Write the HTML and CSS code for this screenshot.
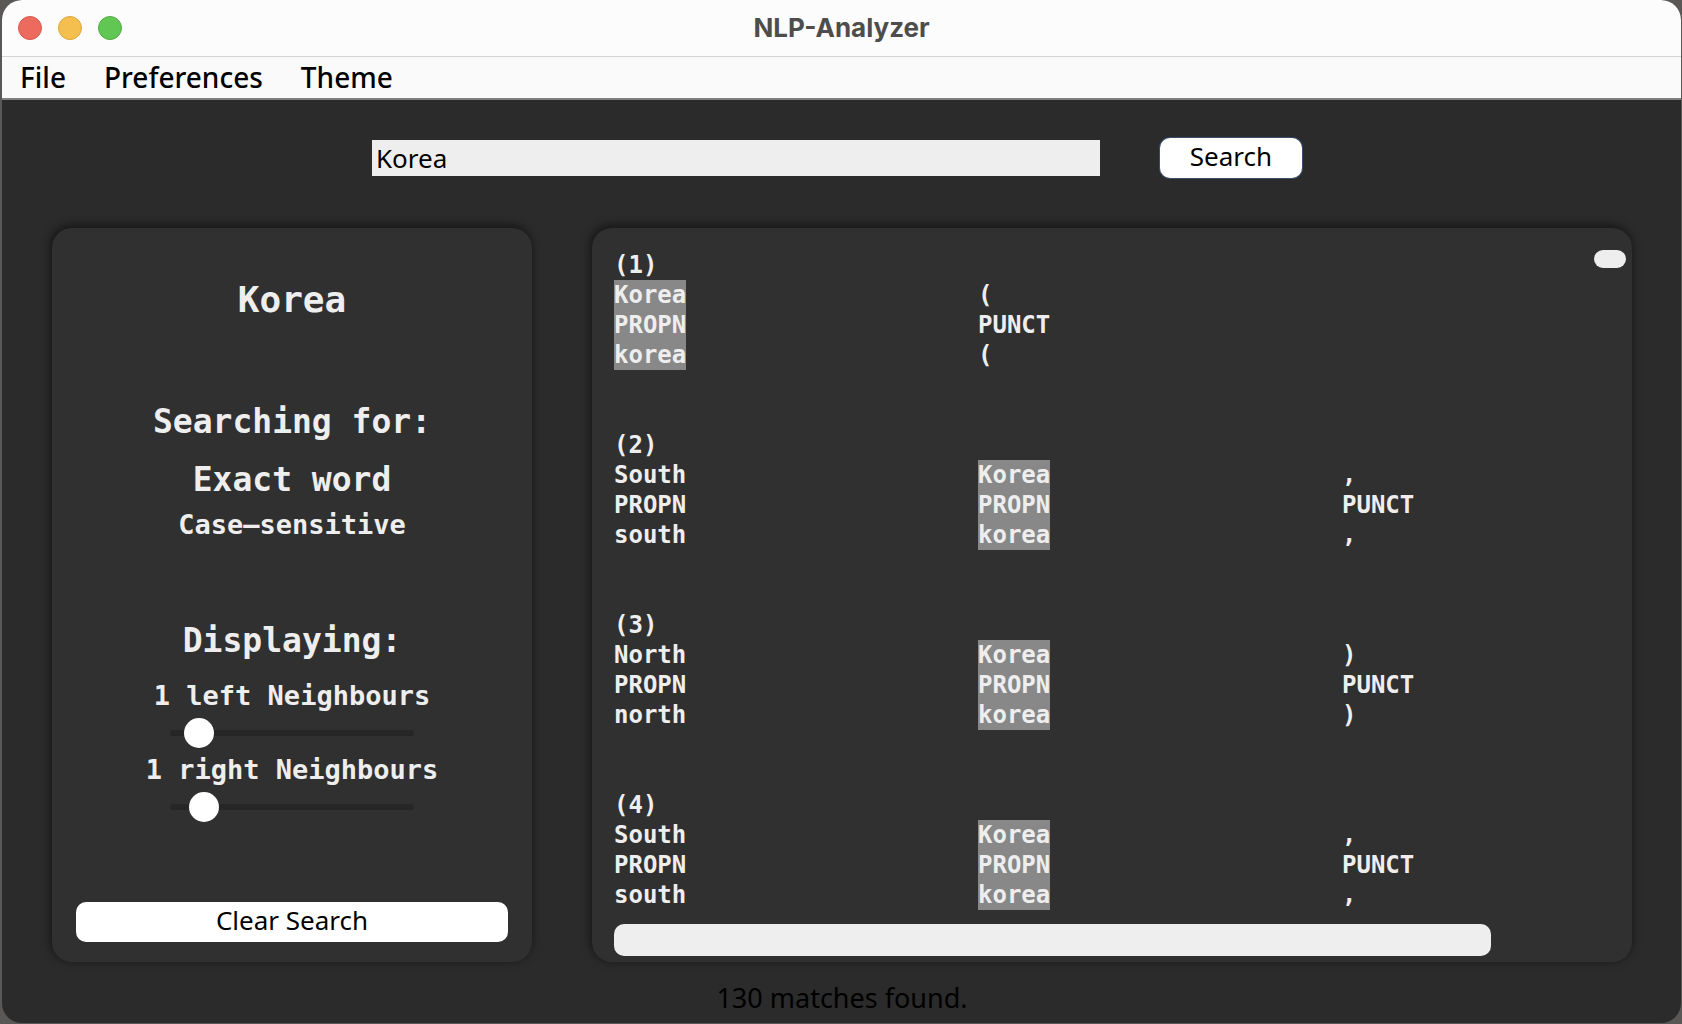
FILE: index.html
```html
<!DOCTYPE html>
<html lang="en">
<head>
<meta charset="utf-8">
<title>NLP-Analyzer</title>
<link rel="stylesheet" href="styles.css">
</head>
<body>
<div class="window">
  <header class="titlebar">
    <div class="lights">
      <button class="light light-close" aria-label="Close"></button>
      <button class="light light-min" aria-label="Minimize"></button>
      <button class="light light-zoom" aria-label="Zoom"></button>
    </div>
    <h1 class="title">NLP-Analyzer</h1>
  </header>
  <nav class="menubar">
    <button class="menu">File</button>
    <button class="menu">Preferences</button>
    <button class="menu">Theme</button>
  </nav>
  <main class="content">
    <form class="search">
      <input class="search-input" type="text" value="Korea" aria-label="Search term">
      <button class="btn btn-search" type="button">Search</button>
    </form>
    <div class="panels">
      <aside class="card sidebar">
        <h2 class="term">Korea</h2>
        <section class="group">
          <h3 class="heading">Searching for:</h3>
          <p class="heading mode">Exact word</p>
          <p class="detail">Case–sensitive</p>
        </section>
        <section class="group">
          <h3 class="heading displaying">Displaying:</h3>
          <div class="neighbours">
            <label class="detail" for="left">1 left Neighbours</label>
            <input class="slider" id="left" type="range" min="0" max="15" value="1">
            <label class="detail" for="right">1 right Neighbours</label>
            <input class="slider" id="right" type="range" min="0" max="11" value="1">
          </div>
        </section>
        <button class="btn btn-clear" type="button">Clear Search</button>
      </aside>
      <section class="card output">
        <div class="results">
          <table class="match">
            <caption>(1)</caption>
            <tr><td><mark>Korea</mark></td><td>(</td><td></td></tr>
            <tr><td><mark>PROPN</mark></td><td>PUNCT</td><td></td></tr>
            <tr><td><mark>korea</mark></td><td>(</td><td></td></tr>
          </table>
          <table class="match">
            <caption>(2)</caption>
            <tr><td>South</td><td><mark>Korea</mark></td><td>,</td></tr>
            <tr><td>PROPN</td><td><mark>PROPN</mark></td><td>PUNCT</td></tr>
            <tr><td>south</td><td><mark>korea</mark></td><td>,</td></tr>
          </table>
          <table class="match">
            <caption>(3)</caption>
            <tr><td>North</td><td><mark>Korea</mark></td><td>)</td></tr>
            <tr><td>PROPN</td><td><mark>PROPN</mark></td><td>PUNCT</td></tr>
            <tr><td>north</td><td><mark>korea</mark></td><td>)</td></tr>
          </table>
          <table class="match">
            <caption>(4)</caption>
            <tr><td>South</td><td><mark>Korea</mark></td><td>,</td></tr>
            <tr><td>PROPN</td><td><mark>PROPN</mark></td><td>PUNCT</td></tr>
            <tr><td>south</td><td><mark>korea</mark></td><td>,</td></tr>
          </table>
        </div>
        <div class="vbar"><div class="vthumb"></div></div>
        <div class="hbar"><div class="hthumb"></div></div>
      </section>
    </div>
    <p class="status">130 matches found.</p>
  </main>
</div>
</body>
</html>
```
FILE: styles.css
```css
* { box-sizing: border-box; }

body {
  margin: 0;
  background: #5a5757;
  font-family: "Noto Sans", "Open Sans", sans-serif;
  color: #000;
}

h1, h2, h3, p { margin: 0; }

button, input { font: inherit; color: inherit; }

.window {
  display: flex;
  flex-direction: column;
  min-height: calc(100vh - 1px);
  margin: 0 1px 1px 2px;
  border-radius: 20px;
  overflow: hidden;
  background: #2b2b2b;
}

/* Title bar and menus */
.titlebar {
  display: grid;
  grid-template-columns: 1fr auto 1fr;
  align-items: center;
  height: 57px;
  padding: 0 16px;
  background: #fcfcfc;
  border-bottom: 1px solid #d4d4d4;
}

.lights { display: flex; gap: 16px; }

.light {
  width: 24px;
  height: 24px;
  padding: 0;
  border: 1px solid;
  border-radius: 50%;
}

.light-close { background: #ec6a5e; border-color: #d85a4f; }
.light-min { background: #f5bf4f; border-color: #dca63c; }
.light-zoom { background: #61c654; border-color: #52ad42; }

.title {
  font: 700 26px/32px Inter, sans-serif;
  color: #4d4d4d;
}

.menubar {
  display: flex;
  gap: 38px;
  padding: 0 18px;
  background: #fafafa;
  border-bottom: 2px solid #808080;
}

.menu {
  padding: 0;
  border: 0;
  background: none;
  font-size: 28px;
  font-weight: 500;
  line-height: 41px;
}

/* Search row */
.content {
  flex: 1;
  display: flex;
  flex-direction: column;
  padding: 38px 49px 7px 50px;
}

.search {
  display: flex;
  justify-content: center;
  align-items: center;
  gap: 60px;
  padding-right: 10px;
}

.search-input {
  width: 728px;
  height: 36px;
  padding: 0 4px;
  border: 0;
  border-radius: 0;
  background: #eee;
  font-size: 26px;
}

.btn {
  height: 40px;
  padding: 0 0 4px;
  border: 0;
  border-radius: 10px;
  background: #fff;
  font-size: 26px;
  line-height: 36px;
}

.btn-search {
  width: 142px;
  box-shadow: 0 0 0 1px #3a4d6b;
}

/* Panels */
.panels {
  flex: 1;
  display: flex;
  gap: 60px;
  margin-top: 50px;
}

.card {
  border-radius: 20px;
  background: #303030;
  box-shadow: -1px -2px 8px 1px rgba(0, 0, 0, 0.5);
  font-family: "DejaVu Sans Mono", monospace;
  font-weight: 700;
  color: #eee;
}

.sidebar {
  flex: none;
  display: flex;
  flex-direction: column;
  gap: 80px;
  width: 480px;
  padding: 50px 24px 20px;
  text-align: center;
}

.term { font-size: 36px; line-height: 44px; }

.heading { font-size: 33px; line-height: 40px; }

.mode { margin: 18px 0 9px; }

.displaying { margin-bottom: 19px; }

.detail { font-size: 27px; line-height: 32px; }

.neighbours {
  display: flex;
  flex-direction: column;
  align-items: center;
  gap: 6px;
}

.slider {
  appearance: none;
  width: 244px;
  height: 30px;
  margin: 0;
  background: none;
}

.slider::-webkit-slider-runnable-track {
  height: 6px;
  border-radius: 3px;
  background: #262626;
}

.slider::-webkit-slider-thumb {
  appearance: none;
  width: 30px;
  height: 30px;
  margin-top: -12px;
  border-radius: 50%;
  background: #fff;
}

.btn-clear {
  margin-top: auto;
  font-family: "Noto Sans", "Open Sans", sans-serif;
  font-weight: 400;
  color: #000;
}

/* Results */
.output {
  flex: 1;
  display: grid;
  grid-template: 1fr 32px / 1fr 32px;
  gap: 6px;
  padding: 22px 6px 6px 22px;
}

.results {
  display: flex;
  flex-direction: column;
  gap: 60px;
  overflow: hidden;
  font-size: 24px;
  line-height: 30px;
}

.match {
  table-layout: fixed;
  width: 100%;
  border-spacing: 0;
}

.match caption { text-align: left; }

.match td {
  width: 364px;
  height: 30px;
  padding: 0;
}

.match td:last-child { width: auto; }

.match mark {
  display: inline-block;
  background: #888;
  color: inherit;
  vertical-align: top;
}

.vthumb {
  height: 18px;
  border-radius: 9px;
  background: #eee;
}

.hthumb {
  width: 90%;
  height: 32px;
  border-radius: 10px;
  background: #eee;
}

.status {
  margin-top: 18px;
  font-size: 27px;
  line-height: 36px;
  text-align: center;
}
```
